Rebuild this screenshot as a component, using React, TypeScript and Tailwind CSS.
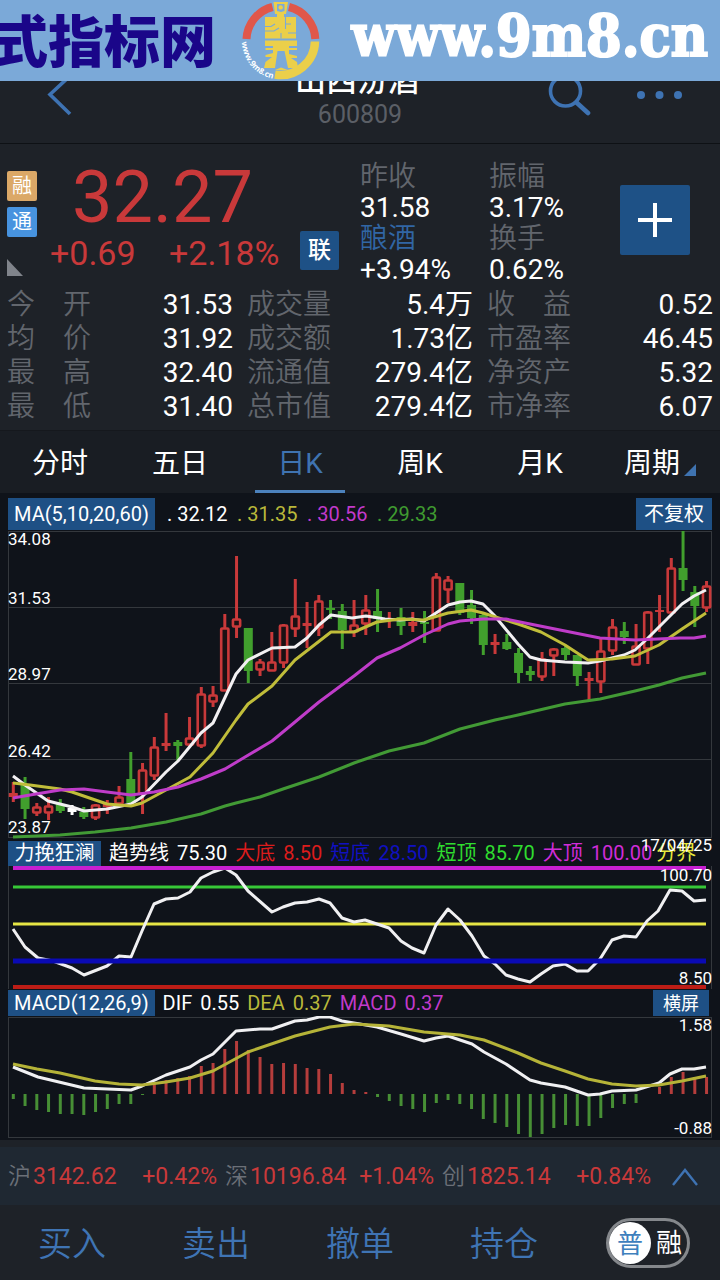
import React from "react";

const RED = "#c9393a";
const GREEN = "#419f2d";
const STEP = 11.75;
const FIRST_X = 13.3;
const barX = (i: number) => FIRST_X + i * STEP;

type Candle = [kind: "r" | "g" | "w", top: number, bottom: number, high: number, low: number];

const candles: Candle[] = [
  ["r", 793, 797, 782, 802], ["g", 785, 809, 777, 819], ["r", 807, 812, 803, 816], ["r", 806, 812, 797, 820],
  ["g", 804, 811, 799, 813], ["w", 808, 812, 805, 815], ["g", 812, 817, 807, 819], ["r", 805, 817, 804, 820],
  ["r", 803, 807, 800, 814], ["r", 797, 803, 786, 804], ["g", 779, 803, 752, 804], ["r", 770, 793, 763, 814],
  ["r", 747, 775, 737, 780], ["r", 743, 746, 713, 751], ["g", 742, 746, 740, 761], ["r", 738, 744, 717, 747],
  ["r", 694, 745, 687, 748], ["r", 695, 701, 686, 707], ["r", 628, 690, 614, 691], ["r", 619, 626, 556, 638],
  ["g", 628, 671, 628, 683], ["r", 662, 669, 659, 676], ["r", 662, 670, 632, 671], ["r", 625, 662, 624, 668],
  ["r", 616, 628, 579, 637], ["r", 623, 626, 602, 648], ["r", 601, 627, 595, 636], ["g", 608, 610, 600, 619],
  ["g", 611, 630, 604, 649], ["r", 625, 631, 600, 637], ["r", 610, 623, 595, 635], ["g", 611, 619, 589, 632],
  ["r", 619, 621, 612, 628], ["g", 617, 626, 608, 635], ["r", 622, 626, 612, 632], ["g", 622, 624, 611, 643],
  ["r", 577, 630, 573, 631], ["r", 580, 589, 576, 603], ["g", 583, 613, 583, 615], ["g", 605, 618, 590, 624],
  ["g", 615, 645, 612, 655], ["r", 642, 645, 634, 654], ["g", 642, 649, 634, 650], ["g", 653, 673, 648, 683],
  ["g", 671, 675, 666, 681], ["r", 659, 676, 652, 681], ["r", 649, 655, 648, 676], ["g", 648, 655, 646, 660],
  ["g", 655, 676, 655, 686], ["r", 678, 681, 672, 700], ["r", 651, 681, 637, 693], ["r", 627, 650, 619, 655],
  ["g", 631, 637, 622, 644], ["r", 646, 664, 624, 665], ["r", 612, 648, 611, 664], ["r", 610, 612, 595, 632],
  ["r", 568, 612, 558, 613], ["g", 568, 580, 531, 591], ["g", 592, 606, 586, 627], ["r", 586, 607, 581, 612],
];

const ma5 =
  "13,776 25,785 48,801 72,807 84,811 107,809 131,804 142,797 166,772 178,761 201,733 213,723 236,674 248,660 272,648 295,647 307,638 319,625 331,615 352,618 366,616 385,619 400,620 412,619 424,621 436,613 448,605 460,602 471,601 483,604 494,615 518,644 530,657 541,660 565,662 588,663 600,661 624,655 635,650 647,639 659,627 682,604 694,596 706,590";
const ma10 =
  "13,783 30,785 60,789 72,792 107,804 131,806 142,803 166,790 190,777 213,753 236,720 248,704 272,686 295,660 331,632 354,632 377,622 400,619 424,620 448,613 471,610 483,613 518,624 541,632 565,645 588,660 612,659 635,656 659,645 682,629 706,613";
const ma20 =
  "13,798 30,795 60,790 84,789 107,792 131,795 154,792 178,787 201,779 225,769 240,760 272,741 295,722 319,702 354,676 377,658 400,648 424,635 448,624 460,621 483,619 506,619 530,624 565,631 600,638 635,640 680,638 694,638 706,636";
const ma60 =
  "13,837 60,835 95,832 131,828 166,822 201,814 225,806 236,803 260,797 283,789 319,777 354,763 389,751 424,743 460,729 495,720 518,715 565,704 600,699 635,691 659,685 682,678 706,673";

const trend =
  "13,929 25,947 38,958 53,961 72,968 84,975 107,966 119,956 131,957 142,931 154,904 166,899 178,898 190,892 201,878 213,872 225,868 236,875 248,891 272,912 283,907 295,903 307,902 319,899 330,903 342,918 354,922 365,920 377,924 389,928 401,941 412,948 424,953 436,925 448,909 460,920 472,936 484,956 495,964 506,975 518,979 530,982 541,974 553,966 565,964 577,971 588,971 600,959 612,940 624,936 636,937 647,921 658,911 670,890 682,891 694,901 706,900";

const dif =
  "13,1067 38,1077 84,1088 131,1090 142,1086 166,1075 190,1067 201,1060 213,1054 225,1042 236,1031 260,1029 272,1029 295,1021 307,1020 319,1017 330,1017 342,1021 360,1024 377,1027 401,1034 424,1041 436,1038 448,1036 472,1044 484,1052 506,1064 530,1080 541,1083 565,1087 588,1095 600,1094 612,1091 636,1090 659,1083 670,1074 682,1069 694,1069 706,1067";
const dea =
  "13,1064 37,1069 60,1073 95,1081 119,1084 142,1085 166,1082 190,1078 213,1071 248,1052 295,1036 330,1027 354,1024 389,1026 424,1032 460,1035 484,1040 518,1053 541,1063 565,1071 588,1079 612,1084 636,1086 659,1085 682,1081 706,1076";

const ZERO = 1094;
const histogram = [
  1099, 1106, 1110, 1112, 1114, 1114, 1115, 1112, 1109, 1104, 1104, 1095, 1083, 1080, 1078, 1076, 1066, 1063, 1049, 1041,
  1050, 1057, 1064, 1063, 1064, 1068, 1069, 1074, 1083, 1090, 1092, 1097, 1101, 1106, 1109, 1112, 1103, 1100, 1104, 1109,
  1119, 1123, 1127, 1134, 1137, 1134, 1128, 1125, 1126, 1126, 1118, 1108, 1104, 1103, 1094, 1087, 1077, 1072, 1077, 1077,
];

const levels = [
  { y: 887, color: "#37c837", width: 3 },
  { y: 924, color: "#e6e645", width: 3 },
];
const frontLevels = [
  { y: 868, color: "#c71fd0", width: 4 },
  { y: 961, color: "#0a0ab4", width: 5 },
  { y: 987, color: "#bd1d16", width: 4 },
];

const quoteColumns = [
  [
    ["今　开", "31.53"],
    ["均　价", "31.92"],
    ["最　高", "32.40"],
    ["最　低", "31.40"],
  ],
  [
    ["成交量", "5.4万"],
    ["成交额", "1.73亿"],
    ["流通值", "279.4亿"],
    ["总市值", "279.4亿"],
  ],
  [
    ["收　益", "0.52"],
    ["市盈率", "46.45"],
    ["净资产", "5.32"],
    ["市净率", "6.07"],
  ],
];

const tabs = ["分时", "五日", "日K", "周K", "月K"];

const indices = [
  { name: "沪", value: "3142.62", change: "+0.42%" },
  { name: "深", value: "10196.84", change: "+1.04%" },
  { name: "创", value: "1825.14", change: "+0.84%" },
];

function Line({ points, color }: { points: string; color: string }) {
  return <polyline points={points} fill="none" stroke={color} strokeWidth="3" strokeLinejoin="round" />;
}

function Coin() {
  return (
    <svg viewBox="240 0 82 81" className="h-[81px] w-[82px] shrink-0">
      <path d="M246.5 39 A34.5 34.5 0 0 1 272.5 7" fill="none" stroke="#e0574a" strokeWidth="8" />
      <path d="M289 7 A34.5 34.5 0 0 1 315.3 39" fill="none" stroke="#e0574a" strokeWidth="8" />
      <path d="M315 41.5 A34.5 34.5 0 0 1 275 74.6" fill="none" stroke="#ebcf4a" strokeWidth="8.5" />
      <path
        fill="#ebcf4a"
        fillRule="evenodd"
        d="M273.5 2 H288 L286 14 H284 V17 H296 V38.5 H265 V17 H277 V14 H275 Z M277 4 V11 L281 12 L284.500 11 V4 Z"
      />
      <circle cx="280.7" cy="7.4" r="2.2" fill="#ebcf4a" />
      <path
        d="M265 26.500 H271 L275 24 M265 31 H274 L279 28 M285.500 17 V29 M285.500 24 H291 M281 33 V38.500 M288 33 H296"
        fill="none"
        stroke="#7ba9d8"
        strokeWidth="1.1"
      />
      <path
        fill="#ebcf4a"
        d="M265 40.5 H297 V46 H289 V48 H297 V50 H289 V54 L297 56 V58 H291 L297 62 L298 68 H288 L284.500 51 H277.500 L275 68 H264 L265.500 62 L272 57 H265.500 V55 L273 53 V50 H265.500 V48 H273 V46 H265 Z"
      />
      <path fill="#ebcf4a" d="M275 70 L281 67.500 L288 70 Z" />
      <path id="coin-text" d="M242 42 A38.500 38.500 0 0 0 275 79" fill="none" />
      <text fill="#ffffff" fontFamily="Open Sans, sans-serif" fontSize="8" fontWeight="700">
        <textPath href="#coin-text">www.9m8.cn</textPath>
      </text>
    </svg>
  );
}

function Banner() {
  return (
    <div className="absolute inset-x-0 top-0 z-10 flex h-[81px] items-start overflow-hidden bg-[#7ba9d8]">
      <span className="-ml-2 w-[248px] shrink-0 font-['Noto_Sans_CJK_SC',sans-serif] text-[56px] leading-[76px] font-black whitespace-nowrap text-[#1a0689]">
        式指标网
      </span>
      <Coin />
      <span className="ml-auto pr-3 font-['DejaVu_Serif_Condensed','DejaVu_Serif',serif] text-[57px] leading-[72px] font-bold whitespace-nowrap text-white [-webkit-text-stroke:2px_white]">
        www.9m8.cn
      </span>
    </div>
  );
}

function Header() {
  return (
    <header className="grid h-[144px] grid-cols-[1fr_auto_1fr] items-end border-b border-[#0e1115]">
      <button className="mb-6 ml-[46px] h-10 w-7 justify-self-start" aria-label="返回">
        <svg viewBox="46 76 28 40" className="h-10 w-7">
          <path d="M71 72 L50 91.500 L70 111" fill="none" stroke="#3e73b3" strokeWidth="3.6" />
        </svg>
      </button>
      <div className="pb-[13px] text-center">
        <h1 className="mr-1.5 text-[31px] leading-[38px] font-medium">山西汾酒</h1>
        <p className="text-[25px] leading-[30px] text-[#5b5f66]">600809</p>
      </div>
      <div className="mr-9 mb-6 flex items-center gap-[45px] justify-self-end">
        <button aria-label="搜索">
          <svg viewBox="548 76 44 40" className="h-10 w-11">
            <circle cx="566.500" cy="88" r="15" fill="none" stroke="#3e73b3" strokeWidth="3.600" />
            <path d="M577.500 99.500 L589 110" stroke="#3e73b3" strokeWidth="4.600" strokeLinecap="round" />
          </svg>
        </button>
        <button aria-label="更多">
          <svg viewBox="636 76 48 40" className="h-10 w-12">
            <circle cx="641" cy="92" r="4" fill="#3e73b3" />
            <circle cx="659.500" cy="92" r="4" fill="#3e73b3" />
            <circle cx="678" cy="92" r="4" fill="#3e73b3" />
          </svg>
        </button>
      </div>
    </header>
  );
}

function Stat({ label, value, link }: { label: string; value: string; link?: boolean }) {
  return (
    <div className="flex flex-col gap-px leading-[30px]">
      <dt className={link ? "font-[350] text-[#3166a4]" : "font-[350] text-[#62666d]"}>{label}</dt>
      <dd>{value}</dd>
    </div>
  );
}

function Quote() {
  return (
    <section className="pt-4 text-[28px]">
      <div className="flex items-start">
        <div className="flex w-[43px] flex-col gap-[6px] pt-[11px] pl-[7px] text-[20px] leading-[30px]">
          <span className="size-[30px] rounded-xs bg-[#dba867] text-center">融</span>
          <span className="size-[30px] rounded-xs bg-[#4793df] text-center">通</span>
          <svg viewBox="0 0 16 17" className="mt-4 h-[17px] w-4">
            <path d="M0 0 L16 17 H0 Z" fill="#80848b" />
          </svg>
        </div>
        <div className="w-[317px] text-[#c9393a]">
          <div className="pt-[5px] pl-[29px] text-[72px] leading-[66px]">32.27</div>
          <div className="flex items-start pl-[7px] text-[34px] leading-[44px]">
            <span className="w-[119px]">+0.69</span>
            <span className="w-[131px]">+2.18%</span>
            <button className="size-[39px] rounded-xs bg-[#1e5186] text-[23px] leading-[38px] font-medium text-white">联</button>
          </div>
        </div>
        <dl className="grid grid-cols-[129px_120px] gap-y-px pt-0.5">
          <Stat label="昨收" value="31.58" />
          <Stat label="振幅" value="3.17%" />
          <Stat label="酿酒" value="+3.94%" link />
          <Stat label="换手" value="0.62%" />
        </dl>
        <button className="mt-[25px] mr-[30px] ml-auto flex size-[70px] items-center justify-center rounded-xs bg-[#1e5186]" aria-label="添加">
          <svg viewBox="0 0 34 34" className="size-[34px]">
            <path d="M17 0 V34 M0 17 H34" stroke="#ffffff" strokeWidth="4" />
          </svg>
        </button>
      </div>
      <div className="grid grid-cols-3 gap-[14px] px-[7px] pt-[3px] pb-[6px] leading-[34px]">
        {quoteColumns.map((rows, c) => (
          <dl key={c}>
            {rows.map(([label, value]) => (
              <div key={label} className="flex justify-between whitespace-nowrap">
                <dt className="font-[350] text-[#62666d]">{label}</dt>
                <dd>{value}</dd>
              </div>
            ))}
          </dl>
        ))}
      </div>
    </section>
  );
}

function PeriodTabs() {
  return (
    <nav className="grid h-[63px] grid-cols-6 border-t border-[#15181d] bg-[#191d23] text-[28px]">
      {tabs.map((tab) => (
        <button key={tab} className={tab === "日K" ? "relative pt-[3px] text-[#3f73b0]" : "relative pt-[3px]"}>
          {tab}
          {tab === "日K" && <span className="absolute inset-x-[15px] bottom-0 h-[3px] bg-[#4c82bd]" />}
        </button>
      ))}
      <button className="flex items-center justify-center gap-1 pt-[3px]">
        周期
        <svg viewBox="0 0 12 12" className="mt-3 size-3">
          <path d="M12 0 V12 H0 Z" fill="#3f73b0" />
        </svg>
      </button>
    </nav>
  );
}

function CandleShape({ candle, i }: { candle: Candle; i: number }) {
  const [kind, top, bottom, high, low] = candle;
  const x = barX(i);
  const color = kind === "r" ? RED : kind === "g" ? GREEN : "#ffffff";
  const hollow = kind === "r" && bottom - top > 4;
  return (
    <g stroke={color} fill={color}>
      {high < top && <line x1={x} x2={x} y1={high} y2={top} strokeWidth="3" />}
      {low > bottom && <line x1={x} x2={x} y1={bottom} y2={low} strokeWidth="3" />}
      {hollow ? (
        <rect x={x - 3.6} y={top + 0.5} width="7.2" height={bottom - top} rx="0.8" fill="#1c1013" strokeWidth="2.6" />
      ) : (
        <rect x={x - 4.5} y={top} width="9" height={bottom - top} strokeWidth="0" />
      )}
    </g>
  );
}

function PriceChart() {
  return (
    <div className="relative">
      <svg viewBox="8 530 704 310" className="block w-full">
        <g stroke="#34383d" strokeWidth="1" fill="none">
          <rect x="8.500" y="531.500" width="703" height="306" />
          <path d="M8 607.500 H712 M8 683.500 H712 M8 759.500 H712" />
        </g>
        {candles.map((candle, i) => (
          <CandleShape key={i} candle={candle} i={i} />
        ))}
        <Line points={ma60} color="#429a35" />
        <Line points={ma5} color="#f2f0f2" />
        <Line points={ma10} color="#c0bd3a" />
        <Line points={ma20} color="#bf3cc9" />
      </svg>
      <div className="absolute inset-x-0 top-0 bottom-1 grid grid-rows-4 text-[17px] leading-[18px]">
        <div className="flex flex-col justify-between">
          <span>34.08</span>
          <span>31.53</span>
        </div>
        <span className="self-end">28.97</span>
        <span className="self-end">26.42</span>
        <span className="self-end">23.87</span>
      </div>
      <span className="absolute right-0 -bottom-[14px] z-10 text-[17px] leading-[18px]">17/04/25</span>
    </div>
  );
}

function TrendChart() {
  return (
    <div className="relative">
      <svg viewBox="8 866 704 124" className="block w-full">
        <path d="M8.500 866 V989 M711.500 866 V989" stroke="#34383d" />
        {levels.map((l) => (
          <line key={l.y} x1="13" x2="706" y1={l.y} y2={l.y} stroke={l.color} strokeWidth={l.width} />
        ))}
        <Line points={trend} color="#f0f0f2" />
        {frontLevels.map((l) => (
          <line key={l.y} x1="13" x2="706" y1={l.y} y2={l.y} stroke={l.color} strokeWidth={l.width} />
        ))}
      </svg>
      <div className="absolute inset-y-0 right-0 flex flex-col items-end justify-between pb-[3px] text-[17px] leading-[18px]">
        <span>100.70</span>
        <span>8.50</span>
      </div>
    </div>
  );
}

function MacdChart() {
  return (
    <div className="relative">
      <svg viewBox="8 1016 704 124" className="block w-full">
        <rect x="8.500" y="1017.500" width="703" height="120" fill="none" stroke="#34383d" />
        {histogram.map((end, i) => (
          <line key={i} x1={barX(i)} x2={barX(i)} y1={ZERO} y2={end} stroke={end > ZERO ? "#478f35" : "#b53d3c"} strokeWidth="3" />
        ))}
        <Line points={dif} color="#f0f0f2" />
        <Line points={dea} color="#b5b338" />
      </svg>
      <div className="absolute inset-y-0 right-0 flex flex-col items-end justify-between pb-[3px] text-[17px] leading-[18px]">
        <span>1.58</span>
        <span>-0.88</span>
      </div>
    </div>
  );
}

function Charts() {
  return (
    <section className="bg-[#0f131a] px-2 pt-[5px] text-[20px] whitespace-nowrap">
      <div className="flex h-8 items-center">
        <button className="mr-3 h-full bg-[#1e5085] px-1.5">MA(5,10,20,60)</button>
        <div className="flex *:w-[70px]">
          <span>. 32.12</span>
          <span className="text-[#b9b83a]">. 31.35</span>
          <span className="text-[#c23acb]">. 30.56</span>
          <span className="text-[#3f9a30]">. 29.33</span>
        </div>
        <button className="ml-auto h-full bg-[#1e5085] px-2">不复权</button>
      </div>
      <PriceChart />
      <div className="flex h-[26px] items-center gap-2 pt-px leading-[25px]">
        <button className="h-full w-[93px] shrink-0 bg-[#1e5085] px-1.5">力挽狂澜</button>
        <span>趋势线</span>
        <span>75.30</span>
        <span className="text-[#dc1c1c]">大底</span>
        <span className="text-[#dc1c1c]">8.50</span>
        <span className="text-[#1010c0]">短底</span>
        <span className="text-[#1010c0]">28.50</span>
        <span className="text-[#2fdc2f]">短顶</span>
        <span className="text-[#2fdc2f]">85.70</span>
        <span className="text-[#d02cd8]">大顶</span>
        <span className="text-[#d02cd8]">100.00</span>
        <span className="-ml-1 text-[#e8e83c]">分界</span>
      </div>
      <TrendChart />
      <div className="flex h-[26px] items-center gap-2 leading-[25px]">
        <button className="h-full bg-[#1e5085] px-1.5">MACD(12,26,9)</button>
        <span>DIF</span>
        <span>0.55</span>
        <span className="text-[#b9b83a]">DEA</span>
        <span className="text-[#b9b83a]">0.37</span>
        <span className="text-[#c23acb]">MACD</span>
        <span className="text-[#c23acb]">0.37</span>
        <button className="mr-[3px] ml-auto h-full bg-[#1e5085] px-2.5 text-[18px]">横屏</button>
      </div>
      <MacdChart />
    </section>
  );
}

function IndexBar() {
  return (
    <div className="mt-[7px] flex h-[58px] items-center gap-2 bg-[#1f2832] px-2 pt-0.5 text-[23px] whitespace-nowrap text-[#c9393a]">
      {indices.map((item) => (
        <div key={item.name} className="flex w-[209px] items-center">
          <span className="mr-0.5 font-[350] text-[#6b7078]">{item.name}</span>
          <span>{item.value}</span>
          <span className="ml-auto">{item.change}</span>
        </div>
      ))}
      <button className="mr-3.5 ml-auto" aria-label="展开">
        <svg viewBox="0 0 26 18" className="h-[18px] w-[26px]">
          <path d="M1 17 L13 2 L25 17" fill="none" stroke="#3e73b3" strokeWidth="2.400" />
        </svg>
      </button>
    </div>
  );
}

function ActionBar() {
  return (
    <div className="grid h-[75px] grid-cols-5 items-center text-[34px] font-[350] text-[#3f74b4]">
      <button className="pt-1">买入</button>
      <button className="pt-1">卖出</button>
      <button className="pt-1">撤单</button>
      <button className="pt-1">持仓</button>
      <button
        role="switch"
        aria-checked="false"
        className="flex h-[50px] w-[84px] items-center justify-self-center rounded-full border-[3px] border-[#85888c] text-[26px] font-normal text-white"
      >
        <span className="size-[42px] shrink-0 rounded-full bg-white text-center leading-[44px] text-[#3e80bd]">普</span>
        <span className="flex-1 pt-0.5 text-center">融</span>
      </button>
    </div>
  );
}

export default function App() {
  return (
    <main className="relative min-h-screen overflow-hidden bg-[#1e2228] font-['Roboto','Noto_Sans_CJK_SC',sans-serif] text-white">
      <Banner />
      <Header />
      <Quote />
      <PeriodTabs />
      <Charts />
      <IndexBar />
      <ActionBar />
    </main>
  );
}
